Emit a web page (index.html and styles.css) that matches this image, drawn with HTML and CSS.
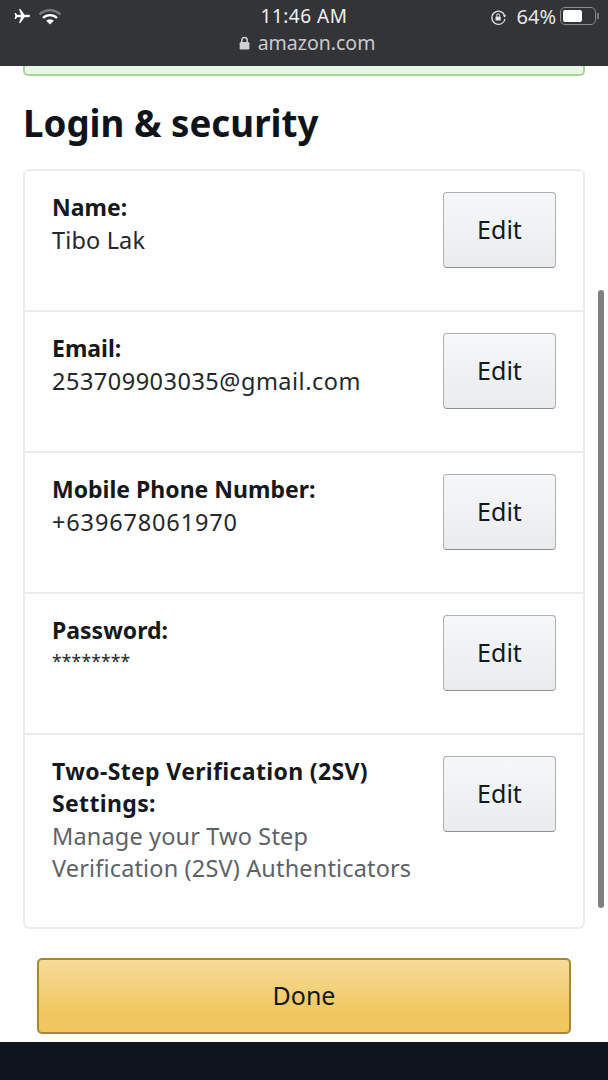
FILE: index.html
```html
<!DOCTYPE html>
<html lang="en">
<head>
	<meta charset="UTF-8">
	<title>Login &amp; security</title>
	<link rel="stylesheet" href="styles.css">
</head>
<body>
<div class="phone">
	<header class="topbar">
		<div class="status-left">
			<svg width="18" height="16" viewBox="0 0 20 18" preserveAspectRatio="none"><path d="M19 9c0-.8-.9-1.300-2-1.300h-4.200L8.300 1H6.600l2.300 6.700H4.600L3 5.600H1.700L2.600 9l-.9 3.400H3l1.600-2.100h4.300L6.600 17h1.700l4.500-6.700H17c1.100 0 2-.5 2-1.300z" fill="#fff"/></svg>
			<svg width="24" height="18" viewBox="0 0 24 18">
				<path d="M1.500 6.500a15 15 0 0 1 21 0" fill="none" stroke="#77787b" stroke-width="2.400"/>
				<path d="M5 10a10 10 0 0 1 14 0" fill="none" stroke="#fff" stroke-width="2.400"/>
				<path d="M8.200 12.800a5.400 5.400 0 0 1 7.600 0L12 16.500z" fill="#fff"/>
			</svg>
		</div>
		<div class="status-mid">
			<div class="clock">11:46 AM</div>
			<div class="address">
				<svg width="11" height="14" viewBox="0 0 10 13"><path d="M2.500 6V3.800a2.500 2.500 0 0 1 5 0V6" fill="none" stroke="#d0d0d2" stroke-width="1.400"/><rect x="0.500" y="5.500" width="9" height="7" rx="1.200" fill="#d0d0d2"/></svg>
				<span>amazon.com</span>
			</div>
		</div>
		<div class="status-right">
			<svg width="17" height="17" viewBox="0 0 17 17"><path d="M14.600 6.200A6.600 6.600 0 1 0 15 10" fill="none" stroke="#e6e6e7" stroke-width="1.300"/><path d="M12.800 6.200h3.600l-1.800 2.200z" fill="#e6e6e7"/><rect x="5.500" y="7.500" width="5.200" height="4" rx=".6" fill="#e6e6e7"/><path d="M6.600 7.500V6.300a1.500 1.500 0 0 1 3 0v1.200" fill="none" stroke="#e6e6e7" stroke-width="1"/></svg>
			<span class="pct">64%</span>
			<span class="battery"><span class="battery-fill"></span></span>
			<span class="battery-tip"></span>
		</div>
	</header>

	<main class="content">
		<div class="alert-green"></div>
		<h1 class="title">Login &amp; security</h1>

		<section class="box">
			<div class="row">
				<div class="info">
					<div class="label">Name:</div>
					<div class="value">Tibo Lak</div>
				</div>
				<button class="btn-edit">Edit</button>
			</div>
			<div class="row">
				<div class="info">
					<div class="label">Email:</div>
					<div class="value value-digits">253709903035@gmail.com</div>
				</div>
				<button class="btn-edit">Edit</button>
			</div>
			<div class="row">
				<div class="info">
					<div class="label">Mobile Phone Number:</div>
					<div class="value value-phone">+639678061970</div>
				</div>
				<button class="btn-edit">Edit</button>
			</div>
			<div class="row">
				<div class="info">
					<div class="label">Password:</div>
					<div class="value value-stars">********</div>
				</div>
				<button class="btn-edit">Edit</button>
			</div>
			<div class="row row-last">
				<div class="info">
					<div class="label label-wide">Two-Step Verification (2SV) Settings:</div>
					<div class="value value-muted">Manage your Two Step Verification (2SV) Authenticators</div>
				</div>
				<button class="btn-edit">Edit</button>
			</div>
		</section>

		<button class="btn-done">Done</button>
		<div class="scroll-thumb"></div>
	</main>

	<footer class="bottom"></footer>
</div>
</body>
</html>
```

FILE: styles.css
```css
*{
	margin: 0;
	padding: 0;
	box-sizing: border-box;
}
body{
	background: #fff;
	font-family: "Noto Sans", "Open Sans", sans-serif;
	color: #111;
	overflow: hidden;
}
.phone{
	width: 608px;
	height: 1080px;
	display: flex;
	flex-direction: column;
}

/* top bar */
.topbar{
	height: 66px;
	background: #333438;
	display: grid;
	grid-template-columns: 1fr auto 1fr;
	padding-top: 5px;
	color: #e6e6e7;
}
.status-left{
	display: flex;
	align-items: flex-start;
	gap: 7px;
	padding: 3px 0 0 13px;
}
.status-mid{
	text-align: center;
}
.clock{
	font-size: 19px;
	line-height: 23px;
	color: #f0f0f1;
	letter-spacing: .5px;
}
.address{
	display: flex;
	align-items: center;
	justify-content: center;
	gap: 8px;
	padding-left: 6px;
	font-size: 19.5px;
	line-height: 30px;
	color: #c9c9cb;
}
.status-right{
	display: flex;
	align-items: flex-start;
	justify-content: flex-end;
	padding-right: 9px;
	font-size: 20px;
	line-height: 23px;
}
.status-right svg{
	margin: 4px 10px 0 0;
}
.battery{
	width: 36px;
	height: 18px;
	margin: 2px 0 0 4px;
	border: 1px solid #8c8d90;
	border-radius: 5px;
	padding: 2px;
}
.battery-fill{
	display: block;
	width: 19px;
	height: 12px;
	background: #fff;
	border-radius: 2px;
}
.battery-tip{
	width: 2px;
	height: 6px;
	margin: 8px 0 0 1px;
	background: #77787b;
}

/* page body */
.content{
	position: relative;
	height: 976px;
	padding: 0 23px;
}
.alert-green{
	height: 10px;
	background: #e6f7e3;
	border: 2px solid #a5d79c;
	border-top: 0;
	border-radius: 0 0 5px 5px;
}
.title{
	font-size: 36.7px;
	line-height: 48px;
	font-weight: 700;
	margin-top: 23px;
	color: #0f141a;
}
.box{
	margin-top: 22px;
	height: 760px;
	border: 2px solid #ececec;
	border-radius: 6px;
}
.row{
	height: 141px;
	display: flex;
	justify-content: space-between;
	align-items: flex-start;
	padding: 20px 27px 0 27px;
	border-bottom: 2px solid #ececec;
}
.row-last{
	border-bottom: 0;
}
.info{
	width: 372px;
}
.label{
	font-size: 23px;
	line-height: 32px;
	font-weight: 700;
	color: #15181c;
}
.label-wide{
	letter-spacing: .35px;
}
.value{
	margin-top: 1px;
	font-size: 23.5px;
	line-height: 32px;
	letter-spacing: .15px;
	color: #24272b;
}
.value-digits{
	letter-spacing: .5px;
}
.value-phone{
	letter-spacing: .85px;
}
.value-stars{
	margin-top: 0;
	font-size: 17.500px;
	line-height: 30px;
}
.value-muted{
	color: #5e6266;
}
.btn-edit{
	width: 113px;
	height: 76px;
	margin-top: 1px;
	padding-bottom: 2px;
	flex-shrink: 0;
	font-family: inherit;
	font-size: 25px;
	color: #15181c;
	border: 1px solid #adafb1;
	border-bottom-color: #8d8f91;
	border-radius: 4px;
	background: linear-gradient(#f6f7f8, #e9ebed);
}
.btn-done{
	display: block;
	width: 534px;
	height: 76px;
	margin: 29px 0 0 14px;
	padding-bottom: 2px;
	font-family: inherit;
	font-size: 25px;
	color: #15181c;
	border: 2px solid #a88734;
	border-radius: 5px;
	background: linear-gradient(#f6dc9b, #f0c75e 75%);
}
.scroll-thumb{
	position: absolute;
	left: 598px;
	top: 224px;
	width: 6px;
	height: 618px;
	background: #808080;
	border-radius: 3px;
}

.bottom{
	flex: 1;
	background: #0f141e;
}
```
